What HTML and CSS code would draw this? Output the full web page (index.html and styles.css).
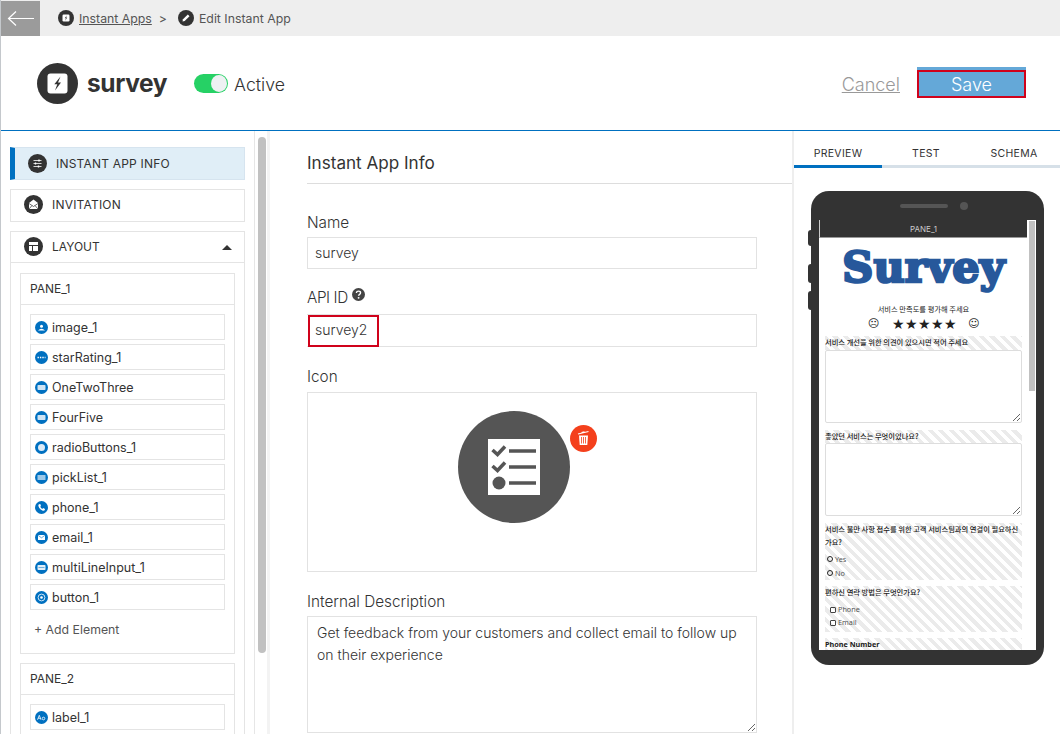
FILE: index.html
```html
<!DOCTYPE html>
<html lang="en">
<head>
<meta charset="UTF-8">
<meta name="viewport" content="width=device-width, initial-scale=1.0">
<title>Edit Instant App</title>
<link rel="stylesheet" href="styles.css">
</head>
<body>

<div id="topbar">
    <div class="back">
        <svg width="40" height="36" viewBox="0 0 40 36"><path d="M33 17.500H8M15 10.500L7.500 17.500L15 24.500" fill="none" stroke="#fff" stroke-width="1.200"/></svg>
    </div>
    <div class="crumbs">
        <svg class="crumb-icon" viewBox="0 0 16 16"><circle cx="8" cy="8" r="8" fill="#333"/><rect x="4.500" y="4.500" width="7" height="7" rx="1.200" fill="#fff"/><path d="M8.800 5.300L6.800 8.300H8L7.200 10.700L9.200 7.600H8Z" fill="#333"/></svg>
        <a class="crumb-link">Instant Apps</a>
        <span class="crumb-sep">&gt;</span>
        <svg class="crumb-icon" viewBox="0 0 16 16"><circle cx="8" cy="8" r="8" fill="#333"/><path d="M4.500 11.500L5 9.300L9.800 4.500L11.500 6.200L6.700 11Z" fill="#fff"/></svg>
        <span class="crumb-text">Edit Instant App</span>
    </div>
</div>

<div id="header">
    <svg class="logo" viewBox="0 0 41 41"><circle cx="20.500" cy="20.500" r="20.500" fill="#333"/><rect x="10.500" y="10.500" width="20" height="20" rx="3" fill="#fff"/><path d="M23.500 13.500L17.300 21.300H20.300L18 27.500L24 19.600H21Z" fill="#333"/></svg>
    <div class="app-name">survey</div>
    <div class="toggle"><span class="knob"></span></div>
    <div class="status">Active</div>
    <div class="spacer"></div>
    <a class="cancel">Cancel</a>
    <div class="save-wrap"><button class="save">Save</button></div>
</div>

<div id="content">
    <div id="sidebar">
        <div class="side-item selected">
            <svg class="black-icon" viewBox="0 0 19 19"><circle cx="9.500" cy="9.500" r="9.500" fill="#333"/><path d="M5.500 6.500H13.500M5.500 9.500H13.500M5.500 12.500H13.500" stroke="#fff" stroke-width=".8"/><path d="M11 5.500V7.500M7.500 8.500V10.500M10.500 11.500V13.500" stroke="#fff" stroke-width="1.400"/></svg>
            <span>INSTANT APP INFO</span>
        </div>
        <div class="side-item">
            <svg class="black-icon" viewBox="0 0 19 19"><circle cx="9.500" cy="9.500" r="9.500" fill="#333"/><path d="M5 8L9.500 4.500L14 8V14H5Z" fill="#fff"/><path d="M5 8.500L9.500 11.500L14 8.500M5 14L8 10.500M14 14L11 10.500" fill="none" stroke="#333" stroke-width=".7"/></svg>
            <span>INVITATION</span>
        </div>
        <div class="layout-box">
            <div class="layout-head">
                <svg class="black-icon" viewBox="0 0 19 19"><circle cx="9.500" cy="9.500" r="9.500" fill="#333"/><path d="M5 5H14V8H5ZM5 9H8V14H5ZM9 9H14V14H9Z" fill="#fff"/></svg>
                <span>LAYOUT</span>
                <span class="caret"></span>
            </div>
            <div class="layout-body">
                <div class="pane">
                    <div class="pane-head">PANE_1</div>
                    <div class="pane-rows">
                        <div class="row"><svg class="blue-icon" viewBox="0 0 13 13"><circle cx="6.500" cy="6.500" r="6.500" fill="#0070c0"/><circle cx="6.500" cy="5.300" r="1.500" fill="#fff"/><path d="M3 9.500Q6.500 6 10 9.500Z" fill="#fff"/></svg>image_1</div>
                        <div class="row"><svg class="blue-icon" viewBox="0 0 13 13"><circle cx="6.500" cy="6.500" r="6.500" fill="#0070c0"/><path d="M2.500 6.500H10.500" stroke="#fff" stroke-width="1.400" stroke-dasharray="1.400 1"/></svg>starRating_1</div>
                        <div class="row"><svg class="blue-icon" viewBox="0 0 13 13"><circle cx="6.500" cy="6.500" r="6.500" fill="#0070c0"/><rect x="2.500" y="4" width="8" height="5" rx=".8" fill="#cfe4f4"/></svg>OneTwoThree</div>
                        <div class="row"><svg class="blue-icon" viewBox="0 0 13 13"><circle cx="6.500" cy="6.500" r="6.500" fill="#0070c0"/><rect x="2.500" y="4" width="8" height="5" rx=".8" fill="#cfe4f4"/></svg>FourFive</div>
                        <div class="row"><svg class="blue-icon" viewBox="0 0 13 13"><circle cx="6.500" cy="6.500" r="6.500" fill="#0070c0"/><circle cx="6.500" cy="6.500" r="3.500" fill="#dcebf7"/></svg>radioButtons_1</div>
                        <div class="row"><svg class="blue-icon" viewBox="0 0 13 13"><circle cx="6.500" cy="6.500" r="6.500" fill="#0070c0"/><rect x="2.500" y="4" width="8" height="5" fill="#9cc8e8"/></svg>pickList_1</div>
                        <div class="row"><svg class="blue-icon" viewBox="0 0 13 13"><circle cx="6.500" cy="6.500" r="6.500" fill="#0070c0"/><path d="M4 3.200L5.300 3L6 5L5.200 5.800Q6 7.300 7.300 7.900L8.100 7.100L10 8L9.700 9.300Q9 10 7.800 9.700Q4.200 8.500 3.400 5Q3.200 3.900 4 3.200Z" fill="#fff"/></svg>phone_1</div>
                        <div class="row"><svg class="blue-icon" viewBox="0 0 13 13"><circle cx="6.500" cy="6.500" r="6.500" fill="#0070c0"/><rect x="3" y="4" width="7" height="5" fill="#fff"/><path d="M3 4.300L6.500 6.800L10 4.300" fill="none" stroke="#0070c0" stroke-width=".6"/></svg>email_1</div>
                        <div class="row"><svg class="blue-icon" viewBox="0 0 13 13"><circle cx="6.500" cy="6.500" r="6.500" fill="#0070c0"/><rect x="2.500" y="4" width="8" height="5" rx=".8" fill="#e3eff8"/><path d="M3.500 6.500H9.500" stroke="#0070c0" stroke-width=".5"/></svg>multiLineInput_1</div>
                        <div class="row"><svg class="blue-icon" viewBox="0 0 13 13"><circle cx="6.500" cy="6.500" r="6.500" fill="#0070c0"/><circle cx="6.500" cy="6.500" r="3.400" fill="none" stroke="#fff" stroke-width=".8"/><circle cx="6.500" cy="6.500" r="1.300" fill="#fff"/></svg>button_1</div>
                        <div class="add-element">+ Add Element</div>
                    </div>
                </div>
                <div class="pane">
                    <div class="pane-head">PANE_2</div>
                    <div class="pane-rows">
                        <div class="row"><svg class="blue-icon" viewBox="0 0 13 13"><circle cx="6.500" cy="6.500" r="6.500" fill="#0070c0"/><path d="M2.500 8.800L4.300 4.300L6 8.800M3.200 7.300H5.500" fill="none" stroke="#fff" stroke-width=".8"/><circle cx="8.500" cy="7.500" r="1.300" fill="none" stroke="#fff" stroke-width=".8"/></svg>label_1</div>
                    </div>
                </div>
            </div>
        </div>
    </div>

    <div id="scroll-track"><div class="scroll-thumb"></div></div>

    <div id="main">
        <h2 class="main-title">Instant App Info</h2>
        <div class="form">
            <label class="field-label name-label">Name</label>
            <div class="text-input">survey</div>

            <label class="field-label api-label">API ID
                <svg class="help" viewBox="0 0 12 12"><circle cx="6" cy="6" r="6" fill="#444"/><path d="M4 4.600Q4.200 2.900 6 2.900Q7.900 2.900 7.900 4.400Q7.900 5.300 7 5.800Q6.100 6.300 6.100 7.200" fill="none" stroke="#fff" stroke-width="1.300"/><circle cx="6.100" cy="9.100" r=".9" fill="#fff"/></svg>
            </label>
            <div class="text-input marked">survey2<span class="red-box"></span></div>

            <label class="field-label icon-label">Icon</label>
            <div class="icon-box">
                <div class="icon-holder">
                    <svg class="big-icon" viewBox="0 0 112 112">
                        <circle cx="56" cy="56" r="56" fill="#555"/>
                        <rect x="30" y="28" width="52" height="56" fill="#fff"/>
                        <path d="M34.500 39L39.500 43.500L47 35.500M34.500 55L39.500 59.500L47 51.500" fill="none" stroke="#555" stroke-width="3.500"/>
                        <path d="M51 40H78M51 56H78M51 72H78" stroke="#555" stroke-width="3.500"/>
                        <circle cx="41" cy="72" r="6.500" fill="#555"/>
                    </svg>
                    <svg class="trash" viewBox="0 0 27 27">
                        <circle cx="13.500" cy="13.500" r="13.500" fill="#f4401c"/>
                        <path d="M8 9L18.500 6.500M11.500 7.500L14.500 6.800" stroke="#fff" stroke-width="1.200"/>
                        <path d="M9 10.500H18L17.300 20H9.700Z" fill="#fff"/>
                        <path d="M11.500 12V18.500M13.500 12V18.500M15.500 12V18.500" stroke="#f4401c" stroke-width=".8"/>
                    </svg>
                </div>
            </div>

            <label class="field-label desc-label">Internal Description</label>
            <textarea class="desc" readonly>Get feedback from your customers and collect email to follow up on their experience</textarea>
        </div>
    </div>

    <div id="preview">
        <div class="tabs">
            <div class="tab active">PREVIEW</div>
            <div class="tab">TEST</div>
            <div class="tab">SCHEMA</div>
        </div>
        <div class="phone">
            <div class="side-btn btn1"></div>
            <div class="side-btn btn2"></div>
            <div class="side-btn btn3"></div>
            <div class="phone-top"><span class="speaker"></span><span class="camera"></span></div>
            <div class="screen">
                <div class="screen-head">PANE_1</div>
                <div class="screen-body">
                    <div class="survey-logo">Survey</div>
                    <div class="rate-title">서비스 만족도를 평가해 주세요</div>
                    <div class="rate-row">
                        <span class="face">☹</span>
                        <span class="stars">★★★★★</span>
                        <span class="face">☺</span>
                    </div>
                    <div class="q q1">서비스 개선을 위한 의견이 있으시면 적어 주세요</div>
                    <textarea class="answer" readonly></textarea>
                    <div class="q q2">좋았던 서비스는 무엇이었나요?</div>
                    <textarea class="answer" readonly></textarea>
                    <div class="q q3">
                        <div class="q-text">서비스 불만 사항 접수를 위한 고객 서비스팀과의 연결이 필요하신<br>가요?</div>
                        <div class="radio"><span class="dot"></span>Yes</div>
                        <div class="radio"><span class="dot"></span>No</div>
                    </div>
                    <div class="q q4">
                        <div class="q-text">편하신 연락 방법은 무엇인가요?</div>
                        <div class="check"><span class="tick"></span>Phone</div>
                        <div class="check"><span class="tick"></span>Email</div>
                    </div>
                    <div class="q q5">Phone Number</div>
                </div>
                <div class="screen-scroll"><div class="screen-thumb"></div></div>
            </div>
        </div>
    </div>
</div>

</body>
</html>
```

FILE: styles.css
```css
html, body {
    margin: 0;
    height: 734px;
    overflow: hidden;
}

body {
    background-color: #fff;
    color: #333;
    font-family: Inter, "Noto Sans", sans-serif;
    border-left: 1px solid #c4c8cc;
    box-sizing: border-box;
}

/* top bar */
#topbar {
    display: flex;
    height: 36px;
    background-color: #eee;
}

.back {
    width: 39px;
    height: 35px;
    margin-top: 1px;
    background-color: #9b9b9b;
}

.crumbs {
    display: flex;
    align-items: center;
    margin-left: 18px;
    font-size: 12.300px;
    color: #555;
}

.crumb-icon {
    width: 16px;
    height: 16px;
    margin-right: 5px;
}

.crumb-link {
    text-decoration: underline;
}

.crumb-sep {
    margin: 1px 11px 0 7px;
}

/* header */
#header {
    display: flex;
    align-items: center;
    height: 94px;
    padding: 0 34px 0 36px;
    border-bottom: 1px solid #0070c0;
}

.logo {
    width: 41px;
    height: 41px;
}

.app-name {
    margin-left: 9px;
    font-size: 24.500px;
    font-weight: 700;
    letter-spacing: -0.4px;
}

.toggle {
    display: flex;
    justify-content: flex-end;
    align-items: center;
    width: 34px;
    height: 19px;
    margin-left: 27px;
    padding-right: 1px;
    box-sizing: border-box;
    border-radius: 10px;
    background-color: #26d165;
}

.knob {
    width: 16px;
    height: 17px;
    border-radius: 50%;
    background-color: #eef1f3;
}

.status {
    margin: 2px 0 0 6px;
    font-size: 17.700px;
    font-weight: 300;
}

.spacer {
    flex: 1;
}

.cancel {
    margin: 2px 17px 0 0;
    color: #999;
    font-size: 18px;
    font-weight: 300;
    text-decoration: underline;
}

.save-wrap {
    position: relative;
    border-top: 3px solid #64a8d8;
    margin-top: -1px;
}

.save {
    display: block;
    width: 109px;
    height: 28px;
    padding: 0;
    border: 2px solid #d0021b;
    background-color: #64a8d8;
    color: #fff;
    font-family: Inter, sans-serif;
    font-size: 18px;
    font-weight: 300;
}

/* columns */
#content {
    display: flex;
    height: 603px;
}

#sidebar {
    width: 254px;
    flex-shrink: 0;
    padding: 16px 9px 0 9px;
    box-sizing: border-box;
    border-right: 1px solid #e6e6e6;
    overflow: hidden;
}

.side-item {
    display: flex;
    align-items: center;
    height: 33px;
    padding: 0 0 2px 13px;
    margin-bottom: 9px;
    box-sizing: border-box;
    border: 1px solid #e4e4e4;
    font-size: 12px;
    letter-spacing: 0.2px;
}

.side-item.selected {
    padding: 0 0 0 13px;
    border: 1px solid #d6e4ef;
    border-left: 5px solid #0070c0;
    background-color: #e0eef7;
}

.black-icon {
    width: 19px;
    height: 19px;
    margin-right: 9px;
    flex-shrink: 0;
}

.layout-box {
    border: 1px solid #e4e4e4;
}

.layout-head {
    display: flex;
    align-items: center;
    height: 31px;
    padding: 0 0 2px 13px;
    box-sizing: border-box;
    border-bottom: 1px solid #e4e4e4;
    font-size: 12px;
}

.caret {
    margin: 2px 12px 0 auto;
    border-left: 5px solid transparent;
    border-right: 5px solid transparent;
    border-bottom: 5px solid #333;
}

.layout-body {
    padding: 10px 9px 0 9px;
}

.pane {
    margin-bottom: 9px;
    border: 1px solid #e4e4e4;
}

.pane-head {
    height: 30px;
    padding-left: 9px;
    line-height: 30px;
    border-bottom: 1px solid #e4e4e4;
    font-size: 12px;
}

.pane-rows {
    padding: 9px 9px 0 9px;
}

.row {
    display: flex;
    align-items: center;
    height: 26px;
    margin-bottom: 4px;
    padding: 1px 0 0 4px;
    box-sizing: border-box;
    border: 1px solid #e4e4e4;
    font-size: 12.500px;
}

.blue-icon {
    width: 13px;
    height: 13px;
    margin-right: 4px;
    flex-shrink: 0;
}

.add-element {
    height: 39px;
    padding: 8px 0 0 4px;
    box-sizing: border-box;
    color: #555;
    font-size: 12.300px;
}

#scroll-track {
    width: 15px;
    flex-shrink: 0;
    padding: 6px 0 0 3px;
    box-sizing: border-box;
    border-right: 3px solid #f3f3f3;
}

.scroll-thumb {
    width: 8px;
    height: 516px;
    border-radius: 4px;
    background-color: #c1c1c1;
}

#main {
    width: 522px;
    flex-shrink: 0;
    padding-left: 37px;
    box-sizing: border-box;
}

.main-title {
    height: 53px;
    margin: 0;
    padding-top: 21px;
    box-sizing: border-box;
    border-bottom: 1px solid #ddd;
    font-size: 17.100px;
    font-weight: 400;
    line-height: 22px;
}

.form {
    width: 450px;
}

.field-label {
    display: block;
    font-size: 15.300px;
    font-weight: 300;
    line-height: 18px;
}

.name-label {
    margin-top: 30px;
    margin-bottom: 5px;
}

.api-label {
    margin-top: 19px;
    margin-bottom: 7px;
    letter-spacing: -0.4px;
}

.icon-label {
    margin-top: 21px;
    margin-bottom: 6px;
}

.desc-label {
    margin-top: 21px;
    margin-bottom: 5px;
}

.help {
    width: 13px;
    height: 13px;
    margin-left: 0;
    vertical-align: 2px;
}

.text-input {
    position: relative;
    height: 32px;
    padding-left: 7px;
    box-sizing: border-box;
    border: 1px solid #e2e2e2;
    font-size: 14px;
    font-weight: 300;
    line-height: 30px;
}

.text-input.marked {
    height: 33px;
    padding-left: 8px;
    border-left: 0;
    border-right: 1px solid #e2e2e2;
}

.red-box {
    position: absolute;
    left: 1px;
    top: 0;
    width: 71px;
    height: 32px;
    box-sizing: border-box;
    border: 2px solid #d0021b;
}

.icon-box {
    display: flex;
    height: 180px;
    box-sizing: border-box;
    justify-content: center;
    align-items: center;
    border: 1px solid #e2e2e2;
}

.icon-holder {
    position: relative;
    width: 112px;
    height: 112px;
    margin: 0 36px 30px 0;
}

.big-icon {
    display: block;
    width: 112px;
    height: 112px;
}

.trash {
    position: absolute;
    left: 112px;
    top: 14px;
    width: 27px;
    height: 27px;
}

.desc {
    display: block;
    width: 450px;
    height: 117px;
    padding: 5px 9px;
    box-sizing: border-box;
    border: 1px solid #e2e2e2;
    border-radius: 0;
    color: #333;
    font-family: Inter, sans-serif;
    font-size: 14px;
    font-weight: 300;
    line-height: 22px;
    outline: none;
}

/* preview column */
#preview {
    flex: 1;
    border-left: 2px solid #eee;
}

.tabs {
    display: flex;
    height: 37px;
    box-sizing: border-box;
    border-bottom: 3px solid #d6e0e8;
}

.tab {
    width: 88px;
    height: 37px;
    padding-top: 16px;
    box-sizing: border-box;
    font-size: 10.500px;
    letter-spacing: 0.3px;
    text-align: center;
}

.tab.active {
    border-bottom: 3px solid #0070c0;
}

.phone {
    position: relative;
    width: 233px;
    height: 474px;
    margin: 23px 0 0 17px;
    padding: 0 8px;
    box-sizing: border-box;
    border-radius: 18px;
    background-color: #333;
}

.side-btn {
    position: absolute;
    left: -3px;
    width: 4px;
    border-radius: 3px 0 0 3px;
    background-color: #333;
}

.btn1 {
    top: 39px;
    height: 16px;
}

.btn2 {
    top: 73px;
    height: 19px;
}

.btn3 {
    top: 100px;
    height: 19px;
}

.phone-top {
    display: flex;
    justify-content: center;
    align-items: center;
    height: 29px;
    padding-left: 12px;
}

.speaker {
    width: 48px;
    height: 4px;
    margin-right: 12px;
    border-radius: 2px;
    background-color: #555;
}

.camera {
    width: 8px;
    height: 8px;
    border-radius: 50%;
    background-color: #555;
}

.screen {
    position: relative;
    height: 430px;
    overflow: hidden;
    background-color: #fff;
}

.screen-head {
    width: 208px;
    height: 18px;
    border-bottom: 1px solid #999;
    border-left: 1px solid #ccc;
    box-sizing: border-box;
    background-color: #333;
    color: #ccc;
    font-size: 8px;
    line-height: 18px;
    text-align: center;
}

.screen-body {
    width: 197px;
    padding-left: 6px;
    font-family: "Noto Sans CJK KR", "Noto Sans", sans-serif;
    font-size: 7.250px;
    color: #222;
}

.survey-logo {
    height: 50px;
    color: #27589b;
    font-family: "DejaVu Serif", serif;
    font-size: 43px;
    font-weight: 700;
    line-height: 58px;
    text-align: center;
    white-space: nowrap;
    -webkit-text-stroke: 2.500px #27589b;
}

.rate-title {
    height: 14px;
    margin-top: 14px;
    line-height: 14px;
    text-align: center;
}

.rate-row {
    display: flex;
    justify-content: center;
    align-items: center;
    height: 15px;
    margin-bottom: 5px;
    font-family: "DejaVu Sans", sans-serif;
}

.face {
    font-size: 11px;
}

.stars {
    margin: 0 11px 0 13px;
    font-size: 14px;
    letter-spacing: 0.400px;
}

.q {
    background-image: repeating-linear-gradient(45deg, #ebebeb 0, #ebebeb 3.700px, #fff 3.700px, #fff 7.400px);
    font-weight: 500;
    line-height: 13px;
}

.q1 {
    height: 14px;
}

.q2 {
    height: 13px;
}

.q3 {
    height: 57px;
    margin-top: 6px;
}

.q4 {
    height: 46px;
    margin-top: 6px;
}

.q5 {
    height: 14px;
    margin-top: 6px;
    font-family: "Noto Sans", sans-serif;
    font-weight: 700;
    line-height: 12px;
}

.answer {
    display: block;
    width: 100%;
    height: 73px;
    margin: 0 0 7px 0;
    padding: 0;
    box-sizing: border-box;
    border: 1px solid #ddd;
    border-radius: 2px;
    background-color: #fff;
    outline: none;
}

.radio, .check {
    display: flex;
    align-items: center;
    height: 14px;
    padding-left: 2px;
    color: #555;
    font-family: "Noto Sans", sans-serif;
    font-weight: 400;
}

.check {
    height: 13px;
    padding-left: 5px;
}

.q-text + .check {
    margin-top: 4px;
}

.q3 .q-text + .radio {
    margin-top: 3px;
}

.dot {
    width: 4px;
    height: 4px;
    margin-right: 2px;
    border: 1px solid #222;
    border-radius: 50%;
}

.tick {
    width: 4px;
    height: 4px;
    margin-right: 2px;
    border: 1px solid #444;
    border-radius: 1px;
}

.screen-scroll {
    position: absolute;
    top: 0;
    right: 0;
    width: 8px;
    height: 100%;
    background-color: #fff;
}

.screen-thumb {
    width: 6px;
    height: 170px;
    margin: 1px 0 0 1px;
    background-color: #c1c1c1;
}
```
